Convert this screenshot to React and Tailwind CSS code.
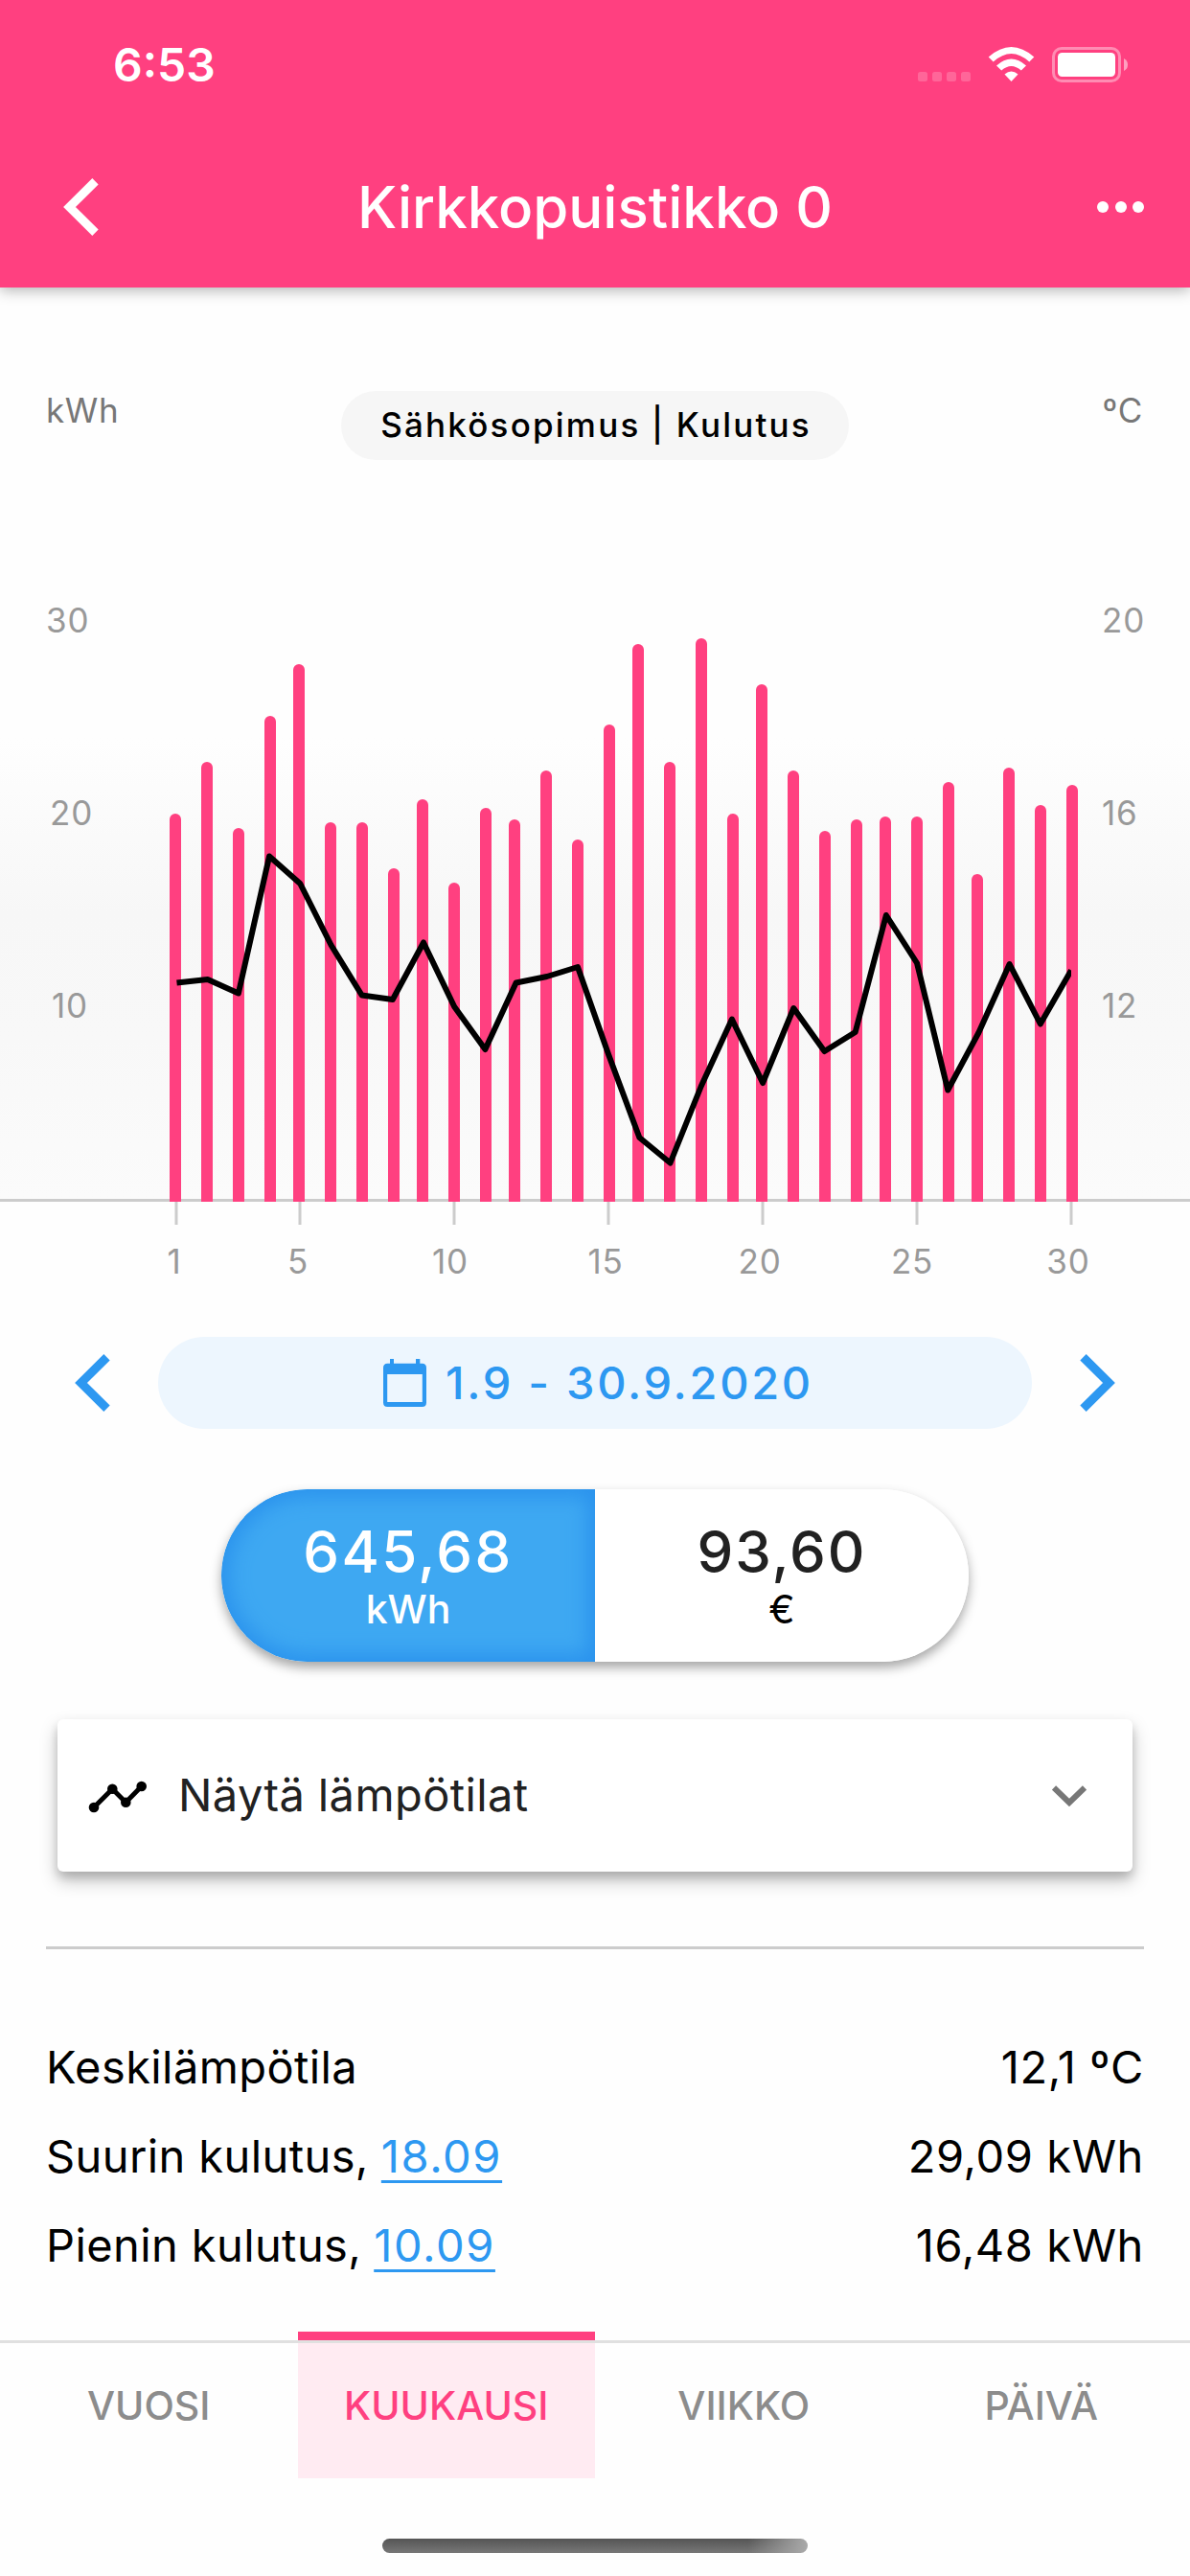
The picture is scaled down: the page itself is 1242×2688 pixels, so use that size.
import React, { useState } from 'react';

const BASELINE = 1254;

// x = center of the bar, top = its upper edge
const BARS = [
  [183, 849], [216, 795], [249, 864], [282, 747], [312, 693], [345, 858], [378, 858], [411, 906], [441, 834], [474, 921],
  [507, 843], [537, 855], [570, 804], [603, 876], [636, 756], [666, 672], [699, 795], [732, 666], [765, 849], [795, 714],
  [828, 804], [861, 867], [894, 855], [924, 852], [957, 852], [990, 816], [1020, 912], [1053, 801], [1086, 840], [1119, 819],
];

const TEMPERATURES = [
  1025.5, 1022, 1036.5, 893.5, 922, 986, 1038.5, 1043, 983.5, 1050.5, 1095, 1025.5, 1019, 1009, 1100.5,
  1187, 1213.5, 1133.5, 1063.5, 1130, 1052, 1097, 1077, 955, 1005, 1137.5, 1077.5, 1006, 1068.5, 1012.5,
];

const DAY_TICKS = [[1, 184, 182], [5, 313, 311], [10, 474, 470], [15, 635, 632], [20, 796, 793], [25, 957, 952], [30, 1118, 1115]];

const TABS = ['VUOSI', 'KUUKAUSI', 'VIIKKO', 'PÄIVÄ'];

const Chevron = ({ className, flip }) => (
  <svg width="37" height="60" viewBox="0 0 37 60" fill="none" stroke="currentColor" strokeWidth="9" className={className}>
    <path d={flip ? 'M3.5 3.2L30.5 30L3.5 56.8' : 'M33.5 3.2L6.5 30L33.5 56.8'} />
  </svg>
);

const StatusIcons = () => (
  <svg width="222" height="40" viewBox="0 0 222 40" fill="#fff">
    {[0, 15, 30, 45].map(x => (
      <rect key={x} x={x} y="27" width="10" height="10" rx="2.5" opacity="0.2" />
    ))}
    <path d="M73.7 11.5Q97.5 -9.5 121.3 11.5L116.3 16.5Q97.5 -.5 78.7 16.5Z" />
    <path d="M82 20.5Q97.5 6.5 113 20.5L107.8 25.5Q97.5 16.5 87.2 25.5Z" />
    <path d="M90.5 29.5Q97.5 23.5 104.5 29.5L97.5 37Z" />
    <rect x="141.500" y="2.500" width="69" height="34" rx="8.500" fill="none" stroke="#fff" strokeWidth="3" opacity="0.4" />
    <rect x="146" y="7" width="60" height="25" rx="4.500" />
    <path d="M215 13Q219 15 219 19.500T215 26Z" opacity="0.5" />
  </svg>
);

const CalendarIcon = () => (
  <svg width="45" height="50" viewBox="0 0 45 50" fill="#2d98f1">
    <path fillRule="evenodd" d="M7 0H11V4.700H34V0H38.300V4.700H40.500Q45 4.700 45 9.200V45.500Q45 50 40.500 50H4.500Q0 50 0 45.500V9.200Q0 4.700 4.500 4.700H7ZM4.200 16V45H40.800V16Z" />
  </svg>
);

const TrendIcon = () => (
  <svg width="62" height="36" viewBox="0 0 62 36">
    <path d="M7 30L26.300 10.700L40.300 24.700L56.700 8" fill="none" stroke="#000" strokeWidth="5" />
    <circle cx="7" cy="30" r="5.300" />
    <circle cx="26.300" cy="10.700" r="5.300" />
    <circle cx="40.300" cy="24.700" r="5.300" />
    <circle cx="56.700" cy="8" r="5.300" />
  </svg>
);

const Header = () => (
  <header className="relative h-[300px] shrink-0 bg-[#ff4080] text-white shadow-[0_3px_14px_rgba(0,0,0,0.3)]">
    <div className="flex h-[136px] items-center justify-between pl-[118px] pr-[62px]">
      <span className="text-[48px] font-semibold">6:53</span>
      <StatusIcons />
    </div>
    <div className="flex h-[160px] items-center justify-between pl-[66px] pr-[48px]">
      <Chevron className="-mr-[6px]" />
      <h1 className="text-[60px] font-medium">Kirkkopuistikko 0</h1>
      <div className="flex w-[49px] justify-between">
        <i className="size-[12px] rounded-full bg-white" />
        <i className="size-[12px] rounded-full bg-white" />
        <i className="size-[12px] rounded-full bg-white" />
      </div>
    </div>
  </header>
);

const Chart = () => {
  const points = TEMPERATURES.map((y, i) => `${184.5 + i * 32.19},${y}`).join(' ');
  return (
    <svg width="1242" height="1060" viewBox="0 300 1242 1060" className="block shrink-0">
      <defs>
        <linearGradient id="shade" x1="0" x2="0" y1="0" y2="1">
          <stop offset="0" stopColor="#fefefe" />
          <stop offset="0.38" stopColor="#f7f7f7" />
          <stop offset="0.65" stopColor="#f8f8f8" />
          <stop offset="1" stopColor="#fbfbfb" />
        </linearGradient>
        <clipPath id="plot"><rect x="184" y="600" width="934" height="660" /></clipPath>
      </defs>
      <rect x="0" y="770" width="1242" height="481" fill="url(#shade)" />
      <rect x="0" y="1251" width="1242" height="3" fill="#ccc" />

      <rect x="356" y="408" width="530" height="72" rx="36" fill="#f6f6f6" />
      <text x="622" y="456" textAnchor="middle" fontSize="35" fontWeight="500" letterSpacing="2.2">Sähkösopimus | Kulutus</text>

      <g fill="#777" fontSize="35" letterSpacing="0.6">
        <text x="48" y="441">kWh</text>
        <text x="1193" y="441" textAnchor="end">ºC</text>
      </g>
      <g fill="#999" fontSize="35" letterSpacing="0.8">
        <text x="48" y="660">30</text>
        <text x="52" y="861">20</text>
        <text x="54" y="1062">10</text>
        <text x="1150" y="660">20</text>
        <text x="1150" y="861">16</text>
        <text x="1150" y="1062">12</text>
      </g>

      {BARS.map(([x, top]) => (
        <path key={x} fill="#ff4080" d={`M${x - 6} ${BASELINE}V${top + 6}a6 6 0 0 1 12 0V${BASELINE}Z`} />
      ))}
      <polyline points={points} fill="none" stroke="#000" strokeWidth="6" strokeLinejoin="round" clipPath="url(#plot)" />

      {DAY_TICKS.map(([day, x, labelX]) => (
        <g key={day}>
          <rect x={x - 1.5} y={BASELINE} width="3" height="24" fill="#ccc" />
          <text x={labelX} y="1329" textAnchor="middle" fontSize="35" fill="#999" letterSpacing="0.8">{day}</text>
        </g>
      ))}
    </svg>
  );
};

const StatRow = ({ label, date, value }) => (
  <div className="flex h-[93px] items-center justify-between text-[47px] tracking-[0.4px]">
    <span>
      {label}
      {date && <a className="ml-[13px] tracking-[1.6px] text-[#2d98f1] underline decoration-[3px] underline-offset-[8px]">{date}</a>}
    </span>
    <span className="tracking-[0.6px]">{value}</span>
  </div>
);

export default function App() {
  const [tab, setTab] = useState('KUUKAUSI');

  return (
    <div className="flex h-[2688px] w-[1242px] flex-col overflow-hidden bg-[#fefefe] font-['Inter',sans-serif] text-black">
      <Header />
      <Chart />

      {/* Date range */}
      <div className="mt-[35px] flex h-[96px] shrink-0 items-center justify-between px-[78px] text-[#2d98f1]">
        <Chevron />
        <button className="flex h-[96px] w-[912px] items-center justify-center gap-[20px] rounded-full bg-[#edf6fe] pl-[7px] text-[47px] font-medium tracking-[2.7px]">
          <CalendarIcon />
          1.9 - 30.9.2020
        </button>
        <Chevron flip />
      </div>

      {/* kWh / € toggle */}
      <div className="mx-auto mt-[63px] flex h-[180px] w-[780px] shrink-0 overflow-hidden rounded-full text-center shadow-[0_6px_12px_rgba(0,0,0,0.35)]">
        <button className="flex flex-1 flex-col items-center justify-center rounded-l-full bg-[#3ea8f2] pt-[5px] text-white shadow-[inset_0_0_20px_8px_#2b93ed]">
          <span className="text-[60px] leading-[64px] font-medium tracking-[2.4px]">645,68</span>
          <span className="text-[41px] leading-[56px] font-medium">kWh</span>
        </button>
        <button className="flex flex-1 flex-col items-center justify-center bg-white pt-[5px]">
          <span className="text-[60px] leading-[64px] font-medium tracking-[2px] text-[#212121]">93,60</span>
          <span className="text-[41px] leading-[56px]">€</span>
        </button>
      </div>

      {/* Temperature select */}
      <div className="mx-[60px] mt-[60px] flex h-[159px] shrink-0 items-center rounded-[6px] bg-white pl-[31px] pr-[48px] shadow-[0_9px_18px_rgba(0,0,0,0.26),0_6px_8px_rgba(0,0,0,0.12)]">
        <TrendIcon />
        <span className="ml-[33px] flex-1 text-[47px] tracking-[0.4px] text-[#212121]">Näytä lämpötilat</span>
        <svg width="36" height="22" viewBox="0 0 36 22" fill="none" stroke="#777" strokeWidth="6">
          <path d="M2 2.500L18 18L34 2.500" />
        </svg>
      </div>

      <hr className="mx-[48px] mt-[78px] h-[3px] shrink-0 border-0 bg-[#ccc]" />

      <section className="mx-[48px] mt-[77px] shrink-0">
        <StatRow label="Keskilämpötila" value="12,1 ºC" />
        <StatRow label="Suurin kulutus," date="18.09" value="29,09 kWh" />
        <StatRow label="Pienin kulutus," date="10.09" value="16,48 kWh" />
      </section>

      {/* Tabs */}
      <nav className="mt-[43px] grid h-[153px] shrink-0 grid-cols-4">
        {TABS.map(name => (
          <button key={name} onClick={() => setTab(name)} className="flex flex-col text-[41px] font-medium">
            <i className={`h-[9px] w-full ${name === tab ? 'bg-[#ff4080]' : ''}`} />
            <i className="h-[3px] w-full bg-[#e0e0e0]" />
            <span className={`flex w-full flex-1 items-center justify-center pb-[10px] ${name === tab ? 'bg-[#ffebf2] text-[#ff4080]' : 'text-[#8c8c8c]'}`}>
              {name}
            </span>
          </button>
        ))}
      </nav>

      <div className="mx-auto mt-[63px] h-[15px] w-[444px] shrink-0 rounded-full bg-[linear-gradient(to_right,transparent_86%,#aaa),linear-gradient(#555,#777)]" />
    </div>
  );
}
